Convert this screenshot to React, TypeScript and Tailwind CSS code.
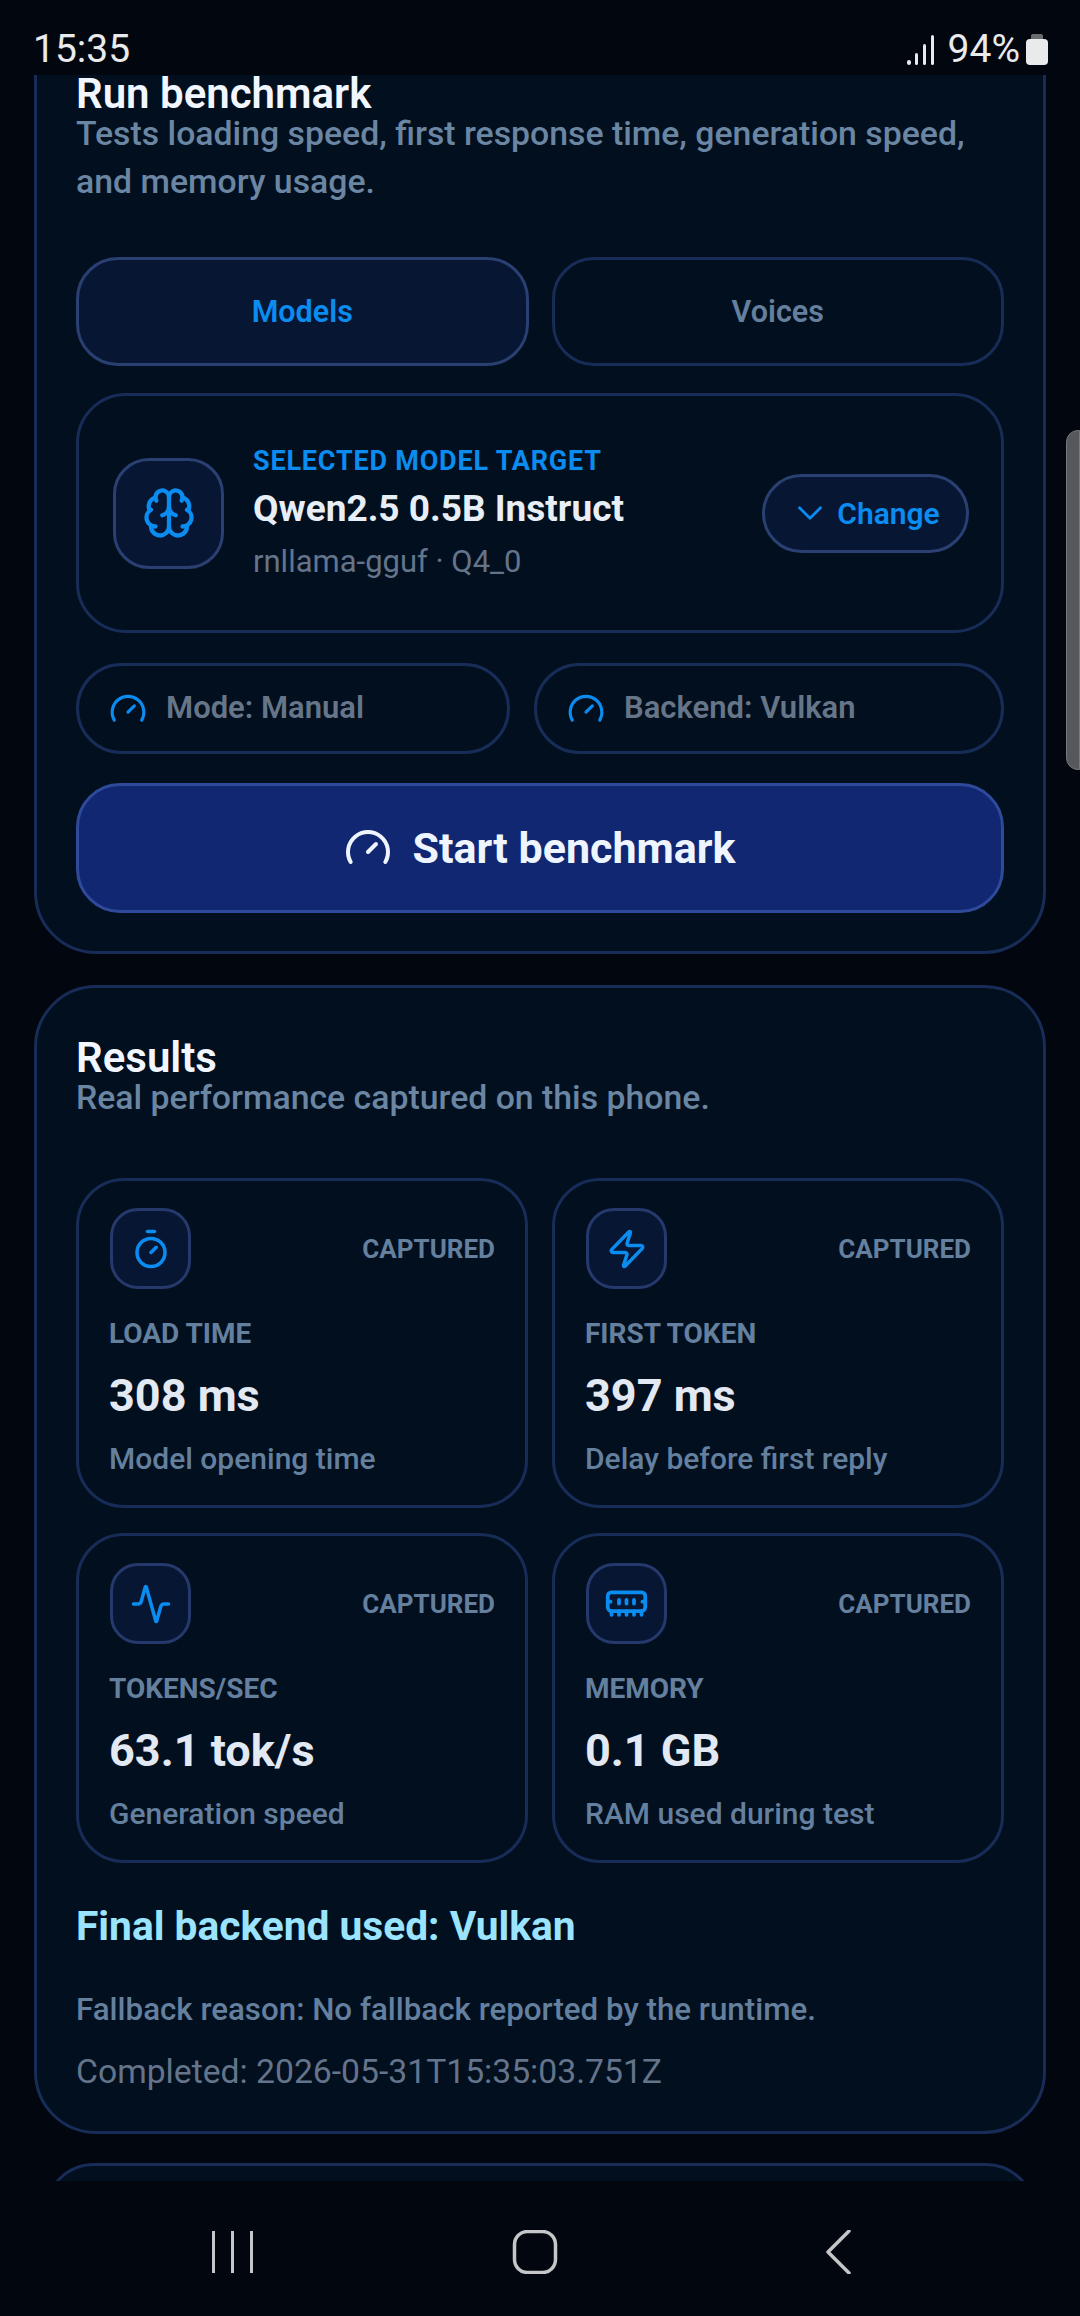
import React from "react";
import { Activity, Brain, ChevronDown, Gauge, MemoryStick, Timer, Zap } from "lucide-react";

const metrics = [
  { icon: Timer, size: 42, label: "LOAD TIME", value: "308 ms", note: "Model opening time" },
  { icon: Zap, size: 42, label: "FIRST TOKEN", value: "397 ms", note: "Delay before first reply" },
  { icon: Activity, size: 42, label: "TOKENS/SEC", value: "63.1 tok/s", note: "Generation speed" },
  { icon: MemoryStick, size: 45, label: "MEMORY", value: "0.1 GB", note: "RAM used during test" },
];

const StatusBar = () => (
  <div className="flex h-[75px] shrink-0 items-center justify-between pl-[33px] pr-[32px] pt-[25px] pb-[1px] text-[#e8eaec]">
    <span className="text-[39px] leading-[49px] font-normal">15:35</span>
    <div className="flex items-center">
      <svg width="28" height="30" viewBox="0 0 28 30" fill="#e8eaec">
        <rect x="0" y="25" width="4" height="5" rx="2" />
        <rect x="8" y="18" width="3" height="12" rx="1.5" />
        <rect x="16" y="9" width="3" height="21" rx="1.5" />
        <rect x="24" y="0" width="3" height="30" rx="1.5" />
      </svg>
      <span className="ml-[13px] text-[39px] leading-[49px] font-normal">94%</span>
      <svg className="ml-[6px]" width="22" height="31" viewBox="0 0 22 31">
        <path d="M7 0h8a2 2 0 0 1 2 2v3H5V2a2 2 0 0 1 2-2z" fill="#6a6d70" />
        <rect x="0" y="5" width="22" height="26" rx="4" fill="#e8eaec" />
      </svg>
    </div>
  </div>
);

const NavBar = () => (
  <div className="flex h-[135px] shrink-0 items-start bg-[#02060f] pt-[49px]">
    <svg width="1080" height="44" viewBox="0 0 1080 44" fill="none" stroke="#c4c6c8">
      <path d="M213.5 1v42M232.5 1v42M251.5 1v42" strokeWidth="3" />
      <rect x="514.5" y="1.5" width="41" height="41" rx="13" strokeWidth="3.5" />
      <path d="M849 1 828 22l21 21" strokeWidth="3.5" strokeLinecap="round" strokeLinejoin="round" />
    </svg>
  </div>
);

const SectionHead = ({ title, sub }: { title: string; sub: string }) => (
  <div>
    <h2 className="text-[42px] leading-[32px] font-semibold text-[#f1f6ff]">{title}</h2>
    <p className="text-[33.8px] leading-[48px] font-medium text-[#6a86a3]">{sub}</p>
  </div>
);

const Chip = ({ text, className }: { text: string; className: string }) => (
  <div className={`flex h-[91px] items-center gap-[19px] rounded-[46px] border-[3px] border-[#182c58] pl-[30px] ${className}`}>
    <Gauge size={38} color="#0a8cf0" strokeWidth={2} />
    <span className="text-[31px] font-semibold text-[#667688]">{text}</span>
  </div>
);

const MetricCard = ({ item }: { item: (typeof metrics)[number] }) => {
  const Icon = item.icon;
  return (
    <div className="h-[330px] rounded-[48px] border-[3px] border-[#182c58] pl-[30px] pr-[30px] pt-[27px]">
      <div className="flex items-center justify-between">
        <div className="ml-[1px] flex h-[81px] w-[81px] items-center justify-center rounded-[28px] border-[3px] border-[#25396c] bg-[#071733]">
          <Icon size={item.size} color="#0a8cf0" strokeWidth={2} />
        </div>
        <span className="mt-[2px] text-[26px] font-bold text-[#64809e]">CAPTURED</span>
      </div>
      <p className="mt-[27px] text-[28px] leading-[36px] font-bold text-[#64809e]">{item.label}</p>
      <p className="mt-[19px] text-[45px] leading-[50px] font-bold text-[#e2e9f3]">{item.value}</p>
      <p className="mt-[18px] text-[30px] leading-[40px] font-medium text-[#64809e]">{item.note}</p>
    </div>
  );
};

export default function App() {
  return (
    <div className="flex h-[2316px] w-[1080px] flex-col overflow-hidden bg-[#02060f] font-['Roboto',sans-serif]">
      <StatusBar />

      <main className="relative min-h-0 flex-1 overflow-hidden">
        <div className="mx-[34px] -mt-[76px] rounded-[62px] border-[3px] border-[#182c58] bg-[#020f1e] px-[39px] pt-[76px] pb-[38px]">
          <SectionHead title="Run benchmark" sub="Tests loading speed, first response time, generation speed, and memory usage." />

          <div className="mt-[51px] grid grid-cols-2 gap-[23px]">
            <button className="h-[109px] rounded-[42px] border-[3px] border-[#2a3f72] bg-[#071733] text-[30.5px] font-semibold text-[#0a8cf0]">
              Models
            </button>
            <button className="h-[109px] rounded-[42px] border-[3px] border-[#182c58] text-[30.5px] font-semibold text-[#64809e]">
              Voices
            </button>
          </div>

          <div className="mt-[27px] flex h-[240px] items-center rounded-[50px] border-[3px] border-[#182c58] pl-[34px] pr-[32px]">
            <div className="flex h-[111px] w-[111px] shrink-0 items-center justify-center rounded-[36px] border-[3px] border-[#2a3f72] bg-[#071733]">
              <Brain size={54} color="#0a8cf0" strokeWidth={1.9} />
            </div>
            <div className="ml-[29px] flex-1">
              <p className="text-[27px] leading-[48px] font-bold tracking-[0.8px] text-[#0a8cf0]">SELECTED MODEL TARGET</p>
              <p className="text-[37px] leading-[48px] font-bold text-[#e8eef6]">Qwen2.5 0.5B Instruct</p>
              <p className="mt-[2px] text-[31px] leading-[54px] text-[#64748b]">rnllama-gguf · Q4_0</p>
            </div>
            <div className="flex h-[79px] w-[207px] shrink-0 items-center justify-center gap-[6px] rounded-[40px] border-[3px] border-[#2a3f72] bg-[#071733] pr-[2px]">
              <ChevronDown size={42} color="#0a8cf0" strokeWidth={1.6} />
              <span className="text-[30px] font-semibold text-[#0a8cf0]">Change</span>
            </div>
          </div>

          <div className="mt-[30px] flex gap-[24px]">
            <Chip text="Mode: Manual" className="w-[434px]" />
            <Chip text="Backend: Vulkan" className="flex-1" />
          </div>

          <button className="mt-[29px] flex h-[130px] w-full items-center justify-center gap-[20px] rounded-[44px] border-[3px] border-[#2f4a9a] bg-[#122771]">
            <Gauge size={48} color="#eef5ff" strokeWidth={2} />
            <span className="text-[43px] font-bold text-[#eef5ff]">Start benchmark</span>
          </button>
        </div>

        <div className="mx-[34px] mt-[31px] rounded-[62px] border-[3px] border-[#182c58] bg-[#020f1e] px-[39px] pt-[54px] pb-[37px]">
          <SectionHead title="Results" sub="Real performance captured on this phone." />

          <div className="mt-[56px] grid grid-cols-2 gap-y-[25px] gap-x-[24px]">
            {metrics.map((item) => (
              <MetricCard key={item.label} item={item} />
            ))}
          </div>

          <p className="mt-[41px] text-[40.7px] leading-[44px] font-bold text-[#9be4ff]">Final backend used: Vulkan</p>
          <p className="mt-[40px] text-[31.3px] leading-[44px] font-medium text-[#64809e]">Fallback reason: No fallback reported by the runtime.</p>
          <p className="mt-[18px] text-[33.7px] leading-[44px] text-[#64748b]">Completed: 2026-05-31T15:35:03.751Z</p>
        </div>

        <div className="mx-[44px] mt-[29px] h-[80px] rounded-t-[50px] border-[3px] border-[#182c58] bg-[#020f1e]" />

        {/* scroll handle sits on top of the cards */}
        <div className="absolute right-0 top-[355px] h-[340px] w-[14px] rounded-l-[12px] border border-[#77797c] bg-[#55585c]" />
      </main>

      <NavBar />
    </div>
  );
}
